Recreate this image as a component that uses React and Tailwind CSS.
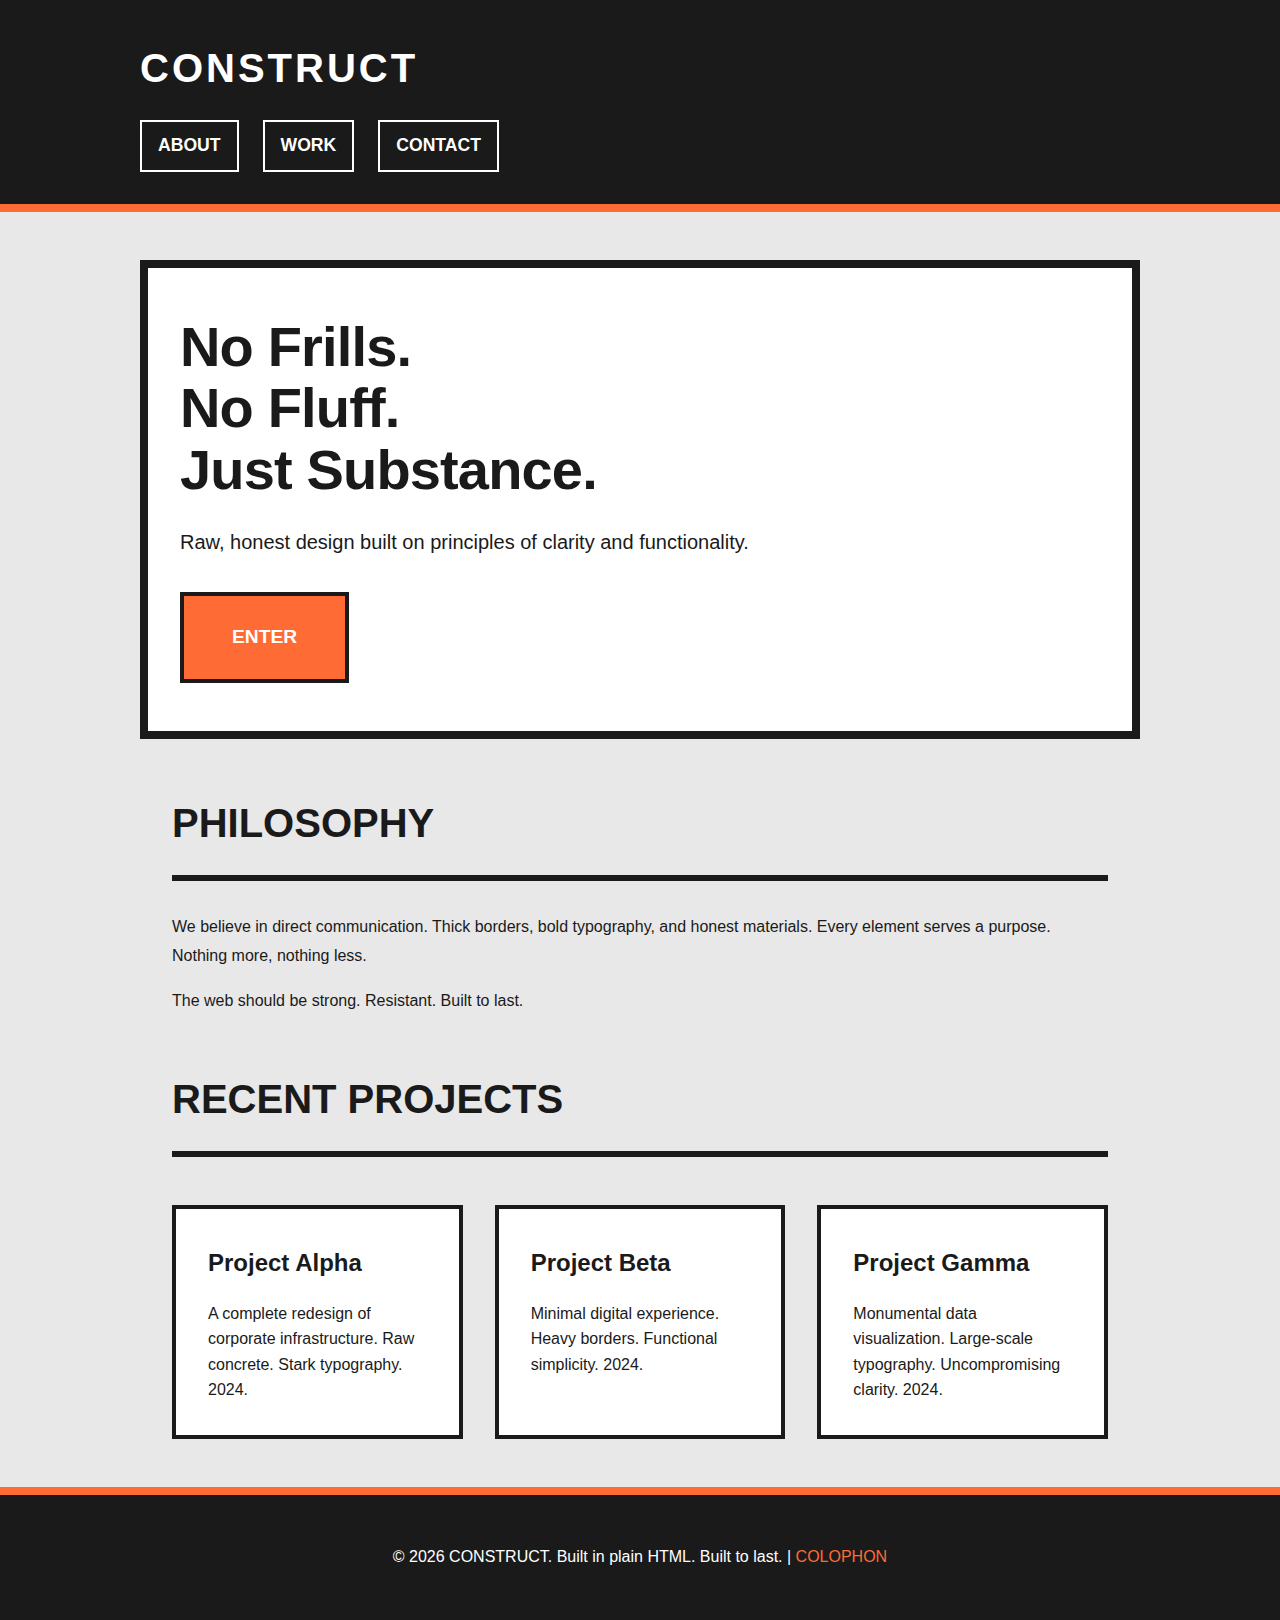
export default function App() {
  const projects = [
    {
      title: "Project Alpha",
      text: "A complete redesign of corporate infrastructure. Raw concrete. Stark typography. 2024.",
    },
    {
      title: "Project Beta",
      text: "Minimal digital experience. Heavy borders. Functional simplicity. 2024.",
    },
    {
      title: "Project Gamma",
      text: "Monumental data visualization. Large-scale typography. Uncompromising clarity. 2024.",
    },
  ];

  return (
    <div className="min-h-screen bg-[#e8e8e8] text-[#1a1a1a] font-['Liberation_Sans',Arial,sans-serif] leading-[1.8]">
      {/* Header */}
      <header className="bg-[#1a1a1a] border-b-8 border-[#ff6b35] pt-8 pb-8">
        <div className="max-w-[1000px] mx-auto">
          <h1 className="text-[2.5rem] leading-[1.8] font-bold tracking-[3px] text-white mb-4">
            CONSTRUCT
          </h1>
          <nav className="flex gap-6">
            {["ABOUT", "WORK", "CONTACT"].map((item) => (
              <a
                key={item}
                href="#"
                className="border-2 border-white text-white font-bold text-[1.1rem] leading-[1.8] px-4 py-2"
              >
                {item}
              </a>
            ))}
          </nav>
        </div>
      </header>

      <main className="pt-12 pb-12">
        <div className="max-w-[1000px] mx-auto">
          {/* Hero */}
          <section className="bg-white border-8 border-[#1a1a1a] px-8 py-12">
            <h2 className="text-[3.5rem] leading-[1.1] font-bold tracking-[-0.015em] mb-6">
              No Frills.
              <br />
              No Fluff.
              <br />
              Just Substance.
            </h2>
            <p className="text-[1.25rem] leading-[1.8] mb-8">
              Raw, honest design built on principles of clarity and functionality.
            </p>
            <a
              href="#"
              className="inline-block bg-[#ff6b35] border-4 border-[#1a1a1a] text-white font-bold text-[1.2rem] leading-[1.8] px-12 py-6"
            >
              ENTER
            </a>
          </section>

          {/* Philosophy */}
          <section className="px-8 mt-12">
            <h2 className="text-[2.5rem] leading-[1.8] font-bold pb-4 border-b-[6px] border-[#1a1a1a] mb-8">
              PHILOSOPHY
            </h2>
            <p className="text-base leading-[1.8] mb-4">
              We believe in direct communication. Thick borders, bold typography, and honest materials.
              Every element serves a purpose. Nothing more, nothing less.
            </p>
            <p className="text-base leading-[1.8]">The web should be strong. Resistant. Built to last.</p>
          </section>

          {/* Projects */}
          <section className="px-8 mt-12">
            <h2 className="text-[2.5rem] leading-[1.8] font-bold pb-4 border-b-[6px] border-[#1a1a1a] mb-12">
              RECENT PROJECTS
            </h2>
            <div className="grid grid-cols-3 gap-8">
              {projects.map((p) => (
                <div key={p.title} className="bg-white border-4 border-[#1a1a1a] p-8">
                  <h3 className="text-[1.5rem] leading-[1.8] font-bold mb-4">{p.title}</h3>
                  <p className="text-base leading-[1.6]">{p.text}</p>
                </div>
              ))}
            </div>
          </section>
        </div>
      </main>

      {/* Footer */}
      <footer className="bg-[#1a1a1a] border-t-8 border-[#ff6b35] py-12 text-center text-white text-base leading-[1.8]">
        © 2026 CONSTRUCT. Built in plain HTML. Built to last. |{" "}
        <a href="#" className="text-[#ff6b35]">
          COLOPHON
        </a>
      </footer>
    </div>
  );
}
